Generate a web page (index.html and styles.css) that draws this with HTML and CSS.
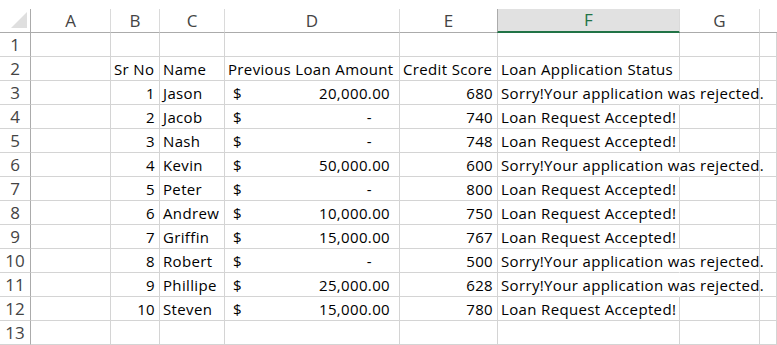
FILE: index.html
```html
<!DOCTYPE html>
<html>
<head>
    <meta charset="UTF-8">
    <title>Loan Sheet</title>
    <link rel="stylesheet" href="styles.css">
</head>

<body>
    <div class="sheet">
        <!-- 열 머리글 -->
        <div class="corner"><span class="tri"></span></div>
        <div class="colHead">A</div>
        <div class="colHead">B</div>
        <div class="colHead">C</div>
        <div class="colHead">D</div>
        <div class="colHead">E</div>
        <div class="colHead active">F</div>
        <div class="colHead">G</div>
        <div class="colHead last"></div>

        <!-- 1 -->
        <div class="rowHead">1</div>
        <div class="cell"></div><div class="cell"></div><div class="cell"></div><div class="cell"></div>
        <div class="cell"></div><div class="cell"></div><div class="cell"></div><div class="cell"></div>

        <!-- 2 -->
        <div class="rowHead">2</div>
        <div class="cell"></div>
        <div class="cell">Sr No</div>
        <div class="cell">Name</div>
        <div class="cell">Previous Loan Amount</div>
        <div class="cell">Credit Score</div>
        <div class="cell">Loan Application Status</div>
        <div class="cell"></div><div class="cell"></div>

        <!-- 3 -->
        <div class="rowHead">3</div>
        <div class="cell"></div>
        <div class="cell num">1</div>
        <div class="cell">Jason</div>
        <div class="cell money"><span>$</span><span>20,000.00</span></div>
        <div class="cell num">680</div>
        <div class="cell over">Sorry!Your application was rejected.</div>
        <div class="cell"></div><div class="cell"></div>

        <!-- 4 -->
        <div class="rowHead">4</div>
        <div class="cell"></div>
        <div class="cell num">2</div>
        <div class="cell">Jacob</div>
        <div class="cell money"><span>$</span><span class="dash">-</span></div>
        <div class="cell num">740</div>
        <div class="cell">Loan Request Accepted!</div>
        <div class="cell"></div><div class="cell"></div>

        <!-- 5 -->
        <div class="rowHead">5</div>
        <div class="cell"></div>
        <div class="cell num">3</div>
        <div class="cell">Nash</div>
        <div class="cell money"><span>$</span><span class="dash">-</span></div>
        <div class="cell num">748</div>
        <div class="cell">Loan Request Accepted!</div>
        <div class="cell"></div><div class="cell"></div>

        <!-- 6 -->
        <div class="rowHead">6</div>
        <div class="cell"></div>
        <div class="cell num">4</div>
        <div class="cell">Kevin</div>
        <div class="cell money"><span>$</span><span>50,000.00</span></div>
        <div class="cell num">600</div>
        <div class="cell over">Sorry!Your application was rejected.</div>
        <div class="cell"></div><div class="cell"></div>

        <!-- 7 -->
        <div class="rowHead">7</div>
        <div class="cell"></div>
        <div class="cell num">5</div>
        <div class="cell">Peter</div>
        <div class="cell money"><span>$</span><span class="dash">-</span></div>
        <div class="cell num">800</div>
        <div class="cell">Loan Request Accepted!</div>
        <div class="cell"></div><div class="cell"></div>

        <!-- 8 -->
        <div class="rowHead">8</div>
        <div class="cell"></div>
        <div class="cell num">6</div>
        <div class="cell">Andrew</div>
        <div class="cell money"><span>$</span><span>10,000.00</span></div>
        <div class="cell num">750</div>
        <div class="cell">Loan Request Accepted!</div>
        <div class="cell"></div><div class="cell"></div>

        <!-- 9 -->
        <div class="rowHead">9</div>
        <div class="cell"></div>
        <div class="cell num">7</div>
        <div class="cell">Griffin</div>
        <div class="cell money"><span>$</span><span>15,000.00</span></div>
        <div class="cell num">767</div>
        <div class="cell">Loan Request Accepted!</div>
        <div class="cell"></div><div class="cell"></div>

        <!-- 10 -->
        <div class="rowHead">10</div>
        <div class="cell"></div>
        <div class="cell num">8</div>
        <div class="cell">Robert</div>
        <div class="cell money"><span>$</span><span class="dash">-</span></div>
        <div class="cell num">500</div>
        <div class="cell over">Sorry!Your application was rejected.</div>
        <div class="cell"></div><div class="cell"></div>

        <!-- 11 -->
        <div class="rowHead">11</div>
        <div class="cell"></div>
        <div class="cell num">9</div>
        <div class="cell">Phillipe</div>
        <div class="cell money"><span>$</span><span>25,000.00</span></div>
        <div class="cell num">628</div>
        <div class="cell over">Sorry!Your application was rejected.</div>
        <div class="cell"></div><div class="cell"></div>

        <!-- 12 -->
        <div class="rowHead">12</div>
        <div class="cell"></div>
        <div class="cell num">10</div>
        <div class="cell">Steven</div>
        <div class="cell money"><span>$</span><span>15,000.00</span></div>
        <div class="cell num">780</div>
        <div class="cell">Loan Request Accepted!</div>
        <div class="cell"></div><div class="cell"></div>

        <!-- 13 -->
        <div class="rowHead">13</div>
        <div class="cell"></div><div class="cell"></div><div class="cell"></div><div class="cell"></div>
        <div class="cell"></div><div class="cell"></div><div class="cell"></div><div class="cell"></div>
    </div>
</body>
</html>
```

FILE: styles.css
```css
/* 전체 설정 */
* {
    margin: 0;
    padding: 0;
    box-sizing: border-box;
}

body {
    background: #fff;
    font-family: "Open Sans", "Liberation Sans", sans-serif;
    font-size: 15px;
    color: #000;
    overflow: hidden;
}

/* 시트 격자 */
.sheet {
    display: grid;
    grid-template-columns: 31px 80px 49px 65px 175px 98px 182px 80px 1fr;
    grid-auto-rows: 24px;
    margin-top: 9px;
}

.corner,
.colHead {
    border-right: 1px solid #dadada;
    border-bottom: 1px solid #ababab;
    color: #444;
    font-size: 17px;
    line-height: 23px;
    text-align: center;
}

.corner {
    display: flex;
    justify-content: flex-end;
    align-items: flex-end;
    padding: 0 3px 4px 0;
    border-right-color: #ababab;
}

.tri {
    width: 16px;
    height: 16px;
    background: #dfdfdf;
    clip-path: polygon(100% 0, 100% 100%, 0 100%);
}

.colHead.active {
    background: #e1e1e1;
    color: #217346;
    border-left: 1px solid #ababab;
    margin-left: -1px;
    border-bottom: 2px solid #217346;
    line-height: 22px;
}

.colHead.last {
    border-right: none;
}

.rowHead {
    border-right: 1px solid #ababab;
    border-bottom: 1px solid #d4d4d4;
    color: #444;
    font-size: 17px;
    line-height: 23px;
    text-align: center;
}

.cell {
    border-right: 1px solid #d4d4d4;
    border-bottom: 1px solid #d4d4d4;
    padding: 1px 3px 0;
    line-height: 22px;
    letter-spacing: 0.35px;
    white-space: nowrap;
}

.num {
    text-align: right;
    padding-right: 4px;
}

.money {
    display: flex;
    justify-content: space-between;
    padding: 1px 9px 0 8px;
}

.money .dash {
    padding-right: 18px;
}

/* 옆 칸으로 넘치는 문장 */
.over {
    overflow: visible;
    border-right-color: transparent;
    position: relative;
    z-index: 1;
}
```
